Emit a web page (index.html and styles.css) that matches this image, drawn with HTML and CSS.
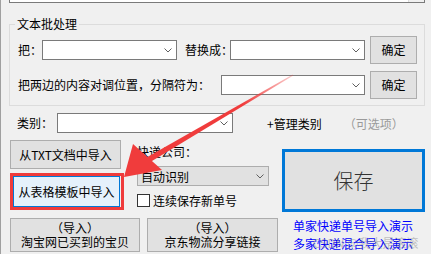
FILE: index.html
```html
<!DOCTYPE html>
<html lang="zh-CN">
<head>
  <meta charset="UTF-8">
  <link rel="stylesheet" href="styles.css">
</head>
<body>
  <div class="window">
    <div class="top-box"><div class="scroll"></div></div>

    <fieldset class="group">
      <legend>文本批处理</legend>
      <div class="row row-1">
        <span class="lbl lbl-ba">把：</span>
        <div class="combo w135">
          <svg class="chev" width="8" height="5" viewBox="0 0 8 5"><polyline points="0.5,0.5 4,4 7.5,0.5" /></svg>
        </div>
        <span class="lbl lbl-replace">替换成：</span>
        <div class="combo w135">
          <svg class="chev" width="8" height="5" viewBox="0 0 8 5"><polyline points="0.5,0.5 4,4 7.5,0.5" /></svg>
        </div>
        <button class="btn ok">确定</button>
      </div>
      <div class="row row-2">
        <span class="lbl lbl-swap">把两边的内容对调位置，分隔符为：</span>
        <div class="combo w144">
          <svg class="chev" width="8" height="5" viewBox="0 0 8 5"><polyline points="0.5,0.5 4,4 7.5,0.5" /></svg>
        </div>
        <button class="btn ok">确定</button>
      </div>
    </fieldset>

    <div class="cat-row">
      <span class="lbl lbl-cat">类别：</span>
      <div class="combo cat-combo">
        <svg class="chev" width="8" height="5" viewBox="0 0 8 5"><polyline points="0.5,0.5 4,4 7.5,0.5" /></svg>
      </div>
      <span class="manage">+管理类别</span>
      <span class="optional">（可选项）</span>
    </div>

    <div class="lower">
      <div class="lower-left">
        <div class="cols">
          <div class="col-a">
            <button class="btn btn-txt">从TXT文档中导入</button>
            <div class="red-mark">
              <button class="btn btn-focus">从表格模板中导入</button>
            </div>
          </div>
          <div class="col-b">
            <div class="express">快递公司：</div>
            <div class="combo dropdown">
              <span>自动识别</span>
              <svg class="chev" width="8" height="5" viewBox="0 0 8 5"><polyline points="0.5,0.5 4,4 7.5,0.5" /></svg>
            </div>
            <div class="check"><span class="box"></span>连续保存新单号</div>
          </div>
        </div>
        <div class="import-row">
          <button class="btn big big-a"><span class="ln">（导入）</span><span class="ln">淘宝网已买到的宝贝</span></button>
          <button class="btn big big-b"><span class="ln">（导入）</span><span class="ln">京东物流分享链接</span></button>
        </div>
      </div>

      <div class="lower-right">
        <button class="save">保存</button>
        <a class="demo" href="#">单家快递单号导入演示</a>
        <a class="demo" href="#">多家快递混合导入演示</a>
      </div>
    </div>

    <!-- 标注箭头 -->
    <svg class="arrow" width="431" height="254" viewBox="0 0 431 254">
      <defs>
        <linearGradient id="shaft" x1="293" y1="75" x2="148" y2="160" gradientUnits="userSpaceOnUse">
          <stop offset="0" stop-color="#f03c3c" stop-opacity="0.25" />
          <stop offset="0.35" stop-color="#f03c3c" stop-opacity="1" />
          <stop offset="1" stop-color="#f03c3c" stop-opacity="1" />
        </linearGradient>
      </defs>
      <polygon points="293.3,75.4 292.7,74.6 146.5,157.4 149.5,162.6" fill="url(#shaft)" />
      <polygon points="124,177 133,144 162,170" fill="#f03c3c" />
    </svg>

    <div class="watermark">CSDN @我大是滚滚</div>
  </div>
</body>
</html>
```

FILE: styles.css
```css
* {
  box-sizing: border-box;
}

body {
  margin: 0;
  background-color: #f0f0f0;
  font-family: "Noto Sans CJK SC", "Liberation Sans", sans-serif;
  font-size: 12px;
  color: #000;
}

.window {
  position: relative;
  width: 431px;
  height: 254px;
  overflow: hidden;
  border-left: 1px solid #a0a0a0;
}

.top-box {
  margin-left: 8px;
  width: 416px;
  height: 3px;
  background: #fff;
  border: 1px solid #7a7a7a;
  border-top: none;
  display: flex;
  justify-content: flex-end;
}

.scroll {
  width: 16px;
  height: 100%;
  background: #f0f0f0;
  border-left: 1px solid #dcdcdc;
}

.group {
  margin: 13px 0 0 8px;
  width: 416px;
  min-width: 0;
  padding: 0 6px 6px 5px;
  border: 1px solid #dcdcdc;
}

.group legend {
  padding: 0 2px;
  line-height: 16px;
}

.row {
  display: flex;
  align-items: center;
  height: 28px;
}

.row-1 {
  margin-top: 4px;
}

.row-2 {
  margin-top: 7px;
}

.lbl {
  line-height: 16px;
  white-space: nowrap;
}

.lbl-ba {
  margin-left: 3px;
  width: 24px;
}

.lbl-replace {
  margin-left: 8px;
  width: 45px;
}

.lbl-swap {
  margin-left: 3px;
  width: 203px;
}

.combo {
  height: 20px;
  background: #fff;
  border: 1px solid #7a7a7a;
  display: flex;
  align-items: center;
  justify-content: flex-end;
  padding-right: 4px;
}

.w135 {
  width: 135px;
}

.w144 {
  width: 144px;
}

.chev polyline {
  fill: none;
  stroke: #606060;
  stroke-width: 1;
}

.btn {
  font: inherit;
  color: #000;
  background: #e1e1e1;
  border: 1px solid #adadad;
  padding: 0;
  line-height: 14px;
}

.ok {
  margin-left: 5px;
  width: 47px;
  height: 28px;
}

.cat-row {
  margin-top: 7px;
  height: 20px;
  display: flex;
  align-items: center;
}

.lbl-cat {
  margin-left: 16px;
  width: 40px;
}

.cat-combo {
  width: 176px;
}

.manage {
  margin-left: 34px;
  white-space: nowrap;
}

.optional {
  margin-left: 22px;
  color: #9a9a9a;
  white-space: nowrap;
}

.lower {
  margin-top: 7px;
  display: flex;
}

.lower-left {
  margin-left: 9px;
  width: 268px;
}

.cols {
  display: flex;
  height: 70px;
}

.col-a {
  width: 127px;
}

.btn-txt {
  display: block;
  width: 111px;
  height: 29px;
}

.red-mark {
  margin-top: 4px;
  width: 114px;
  height: 37px;
  border: 3px solid #ef3b3b;
}

.btn-focus {
  display: block;
  width: 107px;
  height: 31px;
  background: #e5f1fb;
  border-color: #0078d7;
}

.col-b {
  width: 141px;
}

.express {
  margin-top: 4px;
  line-height: 16px;
}

.dropdown {
  margin-top: 6px;
  width: 132px;
  background: #e1e1e1;
  border-color: #adadad;
  justify-content: space-between;
  padding-left: 3px;
}

.check {
  margin-top: 8px;
  height: 13px;
  display: flex;
  align-items: center;
  line-height: 16px;
  white-space: nowrap;
}

.check .box {
  width: 13px;
  height: 13px;
  margin-right: 3px;
  background: #fff;
  border: 1px solid #333;
}

.import-row {
  margin-top: 8px;
  display: flex;
  gap: 7px;
}

.big {
  height: 34px;
  display: flex;
  flex-direction: column;
  align-items: center;
  justify-content: center;
}

.big .ln {
  display: block;
  line-height: 14px;
  white-space: nowrap;
}

.big-a {
  width: 130px;
}

.big-b {
  width: 131px;
}

.lower-right {
  margin-left: 4px;
  display: flex;
  flex-direction: column;
}

.save {
  margin-top: 9px;
  width: 143px;
  height: 63px;
  background: #e1e1e1;
  border: 3px solid #0078d7;
  font-family: "Noto Sans CJK SC", sans-serif;
  font-size: 20px;
  font-weight: 300;
  color: #333;
  padding: 0;
}

.demo {
  display: block;
  margin-left: 11px;
  line-height: 18px;
  color: #0000ff;
  text-decoration: none;
  white-space: nowrap;
}

.demo:first-of-type {
  margin-top: 5px;
}

.arrow {
  position: absolute;
  left: -1px;
  top: 0;
  pointer-events: none;
}

.watermark {
  position: absolute;
  left: 312px;
  top: 235px;
  font-size: 12px;
  line-height: 15px;
  color: rgba(140, 140, 140, 0.5);
  white-space: nowrap;
  pointer-events: none;
}
```
